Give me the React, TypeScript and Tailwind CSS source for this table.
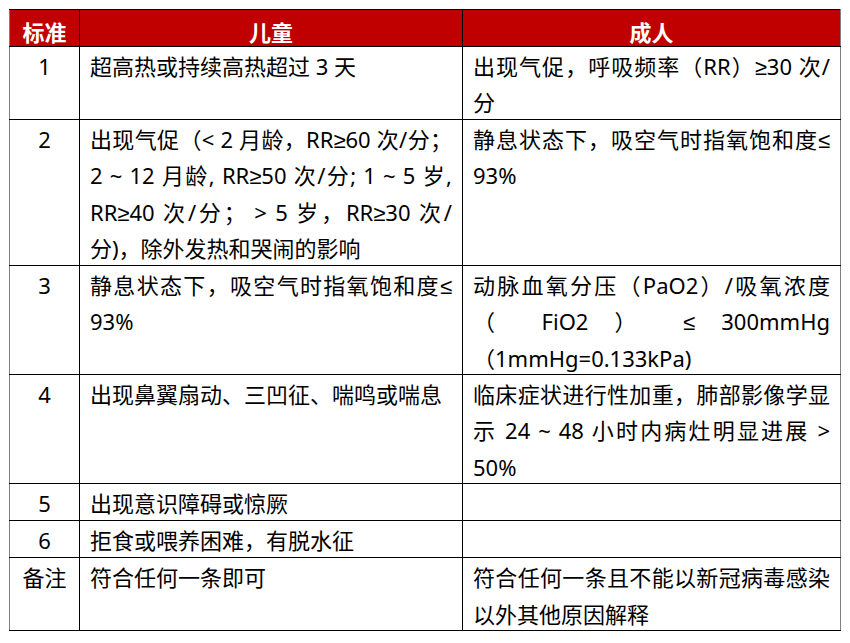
import React from 'react';

type Cell = { lines: string[] };

const rows: { h: string; label: string; child: string[]; adult: string[] }[] = [
  {
    h: 'h-[72px]',
    label: '1',
    child: ['超高热或持续高热超过 3 天'],
    adult: ['出现气促，呼吸频率（RR）≥30 次/', '分'],
  },
  {
    h: 'h-[146px]',
    label: '2',
    child: [
      '出现气促（< 2 月龄，RR≥60 次/分；',
      '2 ~ 12 月龄, RR≥50 次/分; 1 ~ 5 岁,',
      'RR≥40 次/分； > 5 岁，RR≥30 次/',
      '分)，除外发热和哭闹的影响',
    ],
    adult: ['静息状态下，吸空气时指氧饱和度≤', '93%'],
  },
  {
    h: 'h-[109px]',
    label: '3',
    child: ['静息状态下，吸空气时指氧饱和度≤', '93%'],
    adult: ['动脉血氧分压（PaO2）/吸氧浓度', '（ FiO2 ） ≤ 300mmHg', '（1mmHg=0.133kPa)'],
  },
  {
    h: 'h-[109px]',
    label: '4',
    child: ['出现鼻翼扇动、三凹征、喘鸣或喘息'],
    adult: ['临床症状进行性加重，肺部影像学显', '示 24 ~ 48 小时内病灶明显进展 >', '50%'],
  },
  { h: 'h-[37px]', label: '5', child: ['出现意识障碍或惊厥'], adult: [] },
  { h: 'h-[37px]', label: '6', child: ['拒食或喂养困难，有脱水征'], adult: [] },
  {
    h: 'h-[73px]',
    label: '备注',
    child: ['符合任何一条即可'],
    adult: ['符合任何一条且不能以新冠病毒感染', '以外其他原因解释'],
  },
];

// every line but the last is stretched to the full cell width
const Lines: React.FC<Cell> = ({ lines }) => (
  <div className="-mb-[2px]">
    {lines.map((line, i) => (
      <span
        key={i}
        className={
          i < lines.length - 1
            ? 'block whitespace-nowrap text-justify [text-align-last:justify]'
            : 'block whitespace-nowrap'
        }
      >
        {line}
      </span>
    ))}
  </div>
);

export default function App() {
  return (
    <div
      className="min-h-screen bg-white p-[9px] text-[22px] leading-[36.4px] text-black"
      style={{ fontFamily: '"Noto Sans", "Liberation Sans", "Noto Sans CJK SC", sans-serif' }}
    >
      <table className="w-[831px] table-fixed border-collapse">
        <colgroup>
          <col className="w-[70px]" />
          <col className="w-[383px]" />
          <col className="w-[378px]" />
        </colgroup>
        <thead>
          <tr className="h-[37px] bg-[#c00000] font-bold text-white">
            <th className="border border-black border-l-[#808080] p-0 align-top">
              <div className="-mb-[5px] pt-[4px]">标准</div>
            </th>
            <th className="border border-black p-0 align-top">
              <div className="-mb-[5px] pt-[4px]">儿童</div>
            </th>
            <th className="border border-black border-r-[#808080] p-0 align-top">
              <div className="-mb-[5px] pt-[4px]">成人</div>
            </th>
          </tr>
        </thead>
        <tbody>
          {rows.map((r) => (
            <tr key={r.label} className={r.h}>
              <td className="border border-black border-l-[#808080] p-0 pt-[1px] text-center align-top">
                <Lines lines={[r.label]} />
              </td>
              <td className="border border-black px-[10px] pt-[1px] pb-0 align-top">
                <Lines lines={r.child} />
              </td>
              <td className="border border-black border-r-[#808080] px-[10px] pt-[1px] pb-0 align-top">
                <Lines lines={r.adult} />
              </td>
            </tr>
          ))}
        </tbody>
      </table>
    </div>
  );
}
